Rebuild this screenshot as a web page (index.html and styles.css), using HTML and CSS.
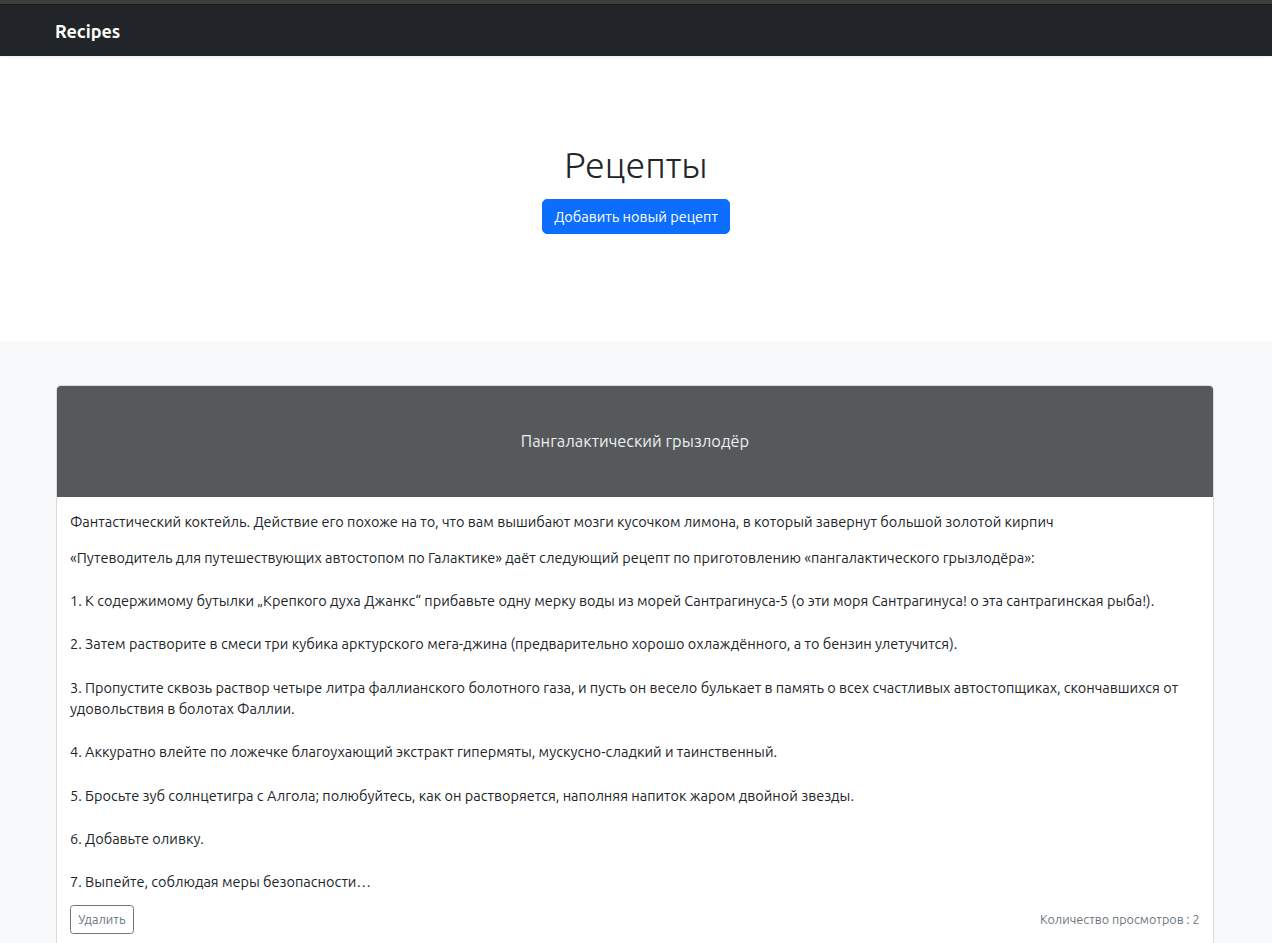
FILE: index.html
```html
<!DOCTYPE html>
<html lang="ru">
<head>
<meta charset="utf-8">
<title>Recipes</title>
<link rel="stylesheet" href="styles.css">
</head>
<body>
<div class="topstrip"></div>
<header class="navbar">
  <div class="nav-inner">
    <a class="brand" href="#">Recipes</a>
  </div>
</header>
<main>
  <section class="hero">
    <h1 class="hero-title">Рецепты</h1>
    <a class="btn btn-primary" href="#">Добавить новый рецепт</a>
  </section>
  <section class="album">
    <div class="card">
      <div class="card-head">Пангалактический грызлодёр</div>
      <div class="card-body">
        <p class="card-text">Фантастический коктейль. Действие его похоже на то, что вам вышибают мозги кусочком лимона, в который завернут большой золотой кирпич</p>
        <p class="card-text recipe">«Путеводитель для путешествующих автостопом по Галактике» даёт следующий рецепт по приготовлению «пангалактического грызлодёра»:

1. К содержимому бутылки „Крепкого духа Джанкс“ прибавьте одну мерку воды из морей Сантрагинуса-5 (о эти моря Сантрагинуса! о эта сантрагинская рыба!).

2. Затем растворите в смеси три кубика арктурского мега-джина (предварительно хорошо охлаждённого, а то бензин улетучится).

3. Пропустите сквозь раствор четыре литра фаллианского болотного газа, и пусть он весело булькает в память о всех счастливых автостопщиках, скончавшихся от удовольствия в болотах Фаллии.

4. Аккуратно влейте по ложечке благоухающий экстракт гипермяты, мускусно-сладкий и таинственный.

5. Бросьте зуб солнцетигра с Алгола; полюбуйтесь, как он растворяется, наполняя напиток жаром двойной звезды.

6. Добавьте оливку.

7. Выпейте, соблюдая меры безопасности…</p>
        <div class="card-foot">
          <button class="btn btn-outline" type="button">Удалить</button>
          <small class="views">Количество просмотров : 2</small>
        </div>
      </div>
    </div>
  </section>
</main>
</body>
</html>
```

FILE: styles.css
```css
* { box-sizing: border-box; }
html, body {
  margin: 0;
  padding: 0;
}
body {
  font-family: Ubuntu, "Open Sans", "Noto Sans", "DejaVu Sans", sans-serif;
  font-size: 14.5px;
  line-height: 21.6px;
  color: #212529;
  background: #f8f9fa;
}
.topstrip {
  height: 5px;
  background: #3d3d3d;
  border-bottom: 1px solid #1a1a1a;
}
.navbar {
  background: #212529;
  height: 51px;
  box-shadow: 0 1px 2px rgba(0,0,0,0.08);
  position: relative;
}
.nav-inner {
  height: 100%;
  display: flex;
  align-items: center;
  padding-left: 55px;
  padding-top: 2px;
}
.brand {
  color: #fff;
  font-weight: 700;
  font-size: 18px;
  text-decoration: none;
}
.hero {
  background: #fff;
  height: 285px;
  display: flex;
  flex-direction: column;
  align-items: center;
  padding-top: 87px;
}
.hero-title {
  margin: 0 0 13px;
  font-size: 36px;
  font-weight: 300;
  line-height: 1.2;
}
.btn {
  display: inline-block;
  font-family: inherit;
  text-decoration: none;
  border-radius: 5px;
  cursor: pointer;
}
.btn-primary {
  background: #0d6efd;
  border: 1px solid #0d6efd;
  color: #fff;
  font-size: 14.5px;
  line-height: 21.6px;
  padding: 5.4px 11px;
}
.album {
  padding: 44px 58px 0 56px;
}
.card {
  background: #fff;
  border: 1px solid #d8dadd;
  border-radius: 5px;
  border-bottom: none;
  border-bottom-left-radius: 0;
  border-bottom-right-radius: 0;
  overflow: hidden;
}
.card-head {
  background: #55595c;
  color: #eceeef;
  height: 111px;
  display: flex;
  align-items: center;
  justify-content: center;
  font-size: 16.4px;
}
.card-body {
  padding: 14px 13.4px 10px 13px;
}
.card-text {
  margin: 0 0 14.4px;
}
.recipe {
  white-space: pre-line;
  margin-bottom: 13px;
}
.card-foot {
  display: flex;
  justify-content: space-between;
  align-items: center;
}
.btn-outline {
  background: #fff;
  border: 1px solid #6c757d;
  color: #6c757d;
  font-size: 12.6px;
  line-height: 1.5;
  padding: 3.6px 7.2px;
  border-radius: 3.5px;
}
.views {
  color: #6c757d;
  font-size: 12.6px;
}
```
